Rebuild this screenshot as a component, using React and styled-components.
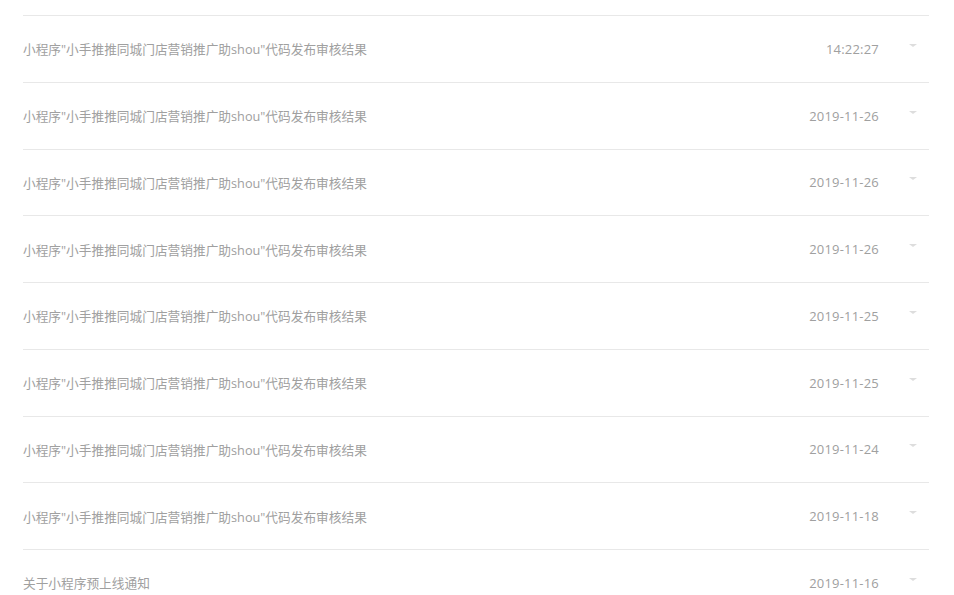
import React from "react";
import styled, { createGlobalStyle } from "styled-components";

const Global = createGlobalStyle`
  html, body { margin: 0; padding: 0; background: #fff; overflow: hidden; }
  body { font-family: "Open Sans", "Noto Sans CJK SC", sans-serif; }
`;

const List = styled.ul`
  list-style: none;
  margin: 0;
  padding: 15px 25px 0 23px;
`;

const Row = styled.li`
  display: flex;
  align-items: center;
  box-sizing: border-box;
  height: 66.75px;
  border-top: 1px solid #e8e8e8;
`;

const Title = styled.span`
  flex: 1;
  font-size: 12.7px;
  color: #a0a0a0;
  white-space: nowrap;
`;

const Time = styled.span`
  font-size: 13px;
  letter-spacing: 0.2px;
  color: #a0a0a0;
`;

const Caret = styled.span`
  width: 0;
  height: 0;
  margin: 0 12px 7px 30px;
  border-left: 4px solid transparent;
  border-right: 4px solid transparent;
  border-top: 3px solid #ddd;
`;

const T = "小程序\"小手推推同城门店营销推广助shou\"代码发布审核结果";

const items = [
  [T, "14:22:27"],
  [T, "2019-11-26"],
  [T, "2019-11-26"],
  [T, "2019-11-26"],
  [T, "2019-11-25"],
  [T, "2019-11-25"],
  [T, "2019-11-24"],
  [T, "2019-11-18"],
  ["关于小程序预上线通知", "2019-11-16"],
];

export default function App() {
  return (
    <>
      <Global />
      <List>
        {items.map(([title, time], i) => (
          <Row key={i}>
            <Title>{title}</Title>
            <Time>{time}</Time>
            <Caret />
          </Row>
        ))}
      </List>
    </>
  );
}
